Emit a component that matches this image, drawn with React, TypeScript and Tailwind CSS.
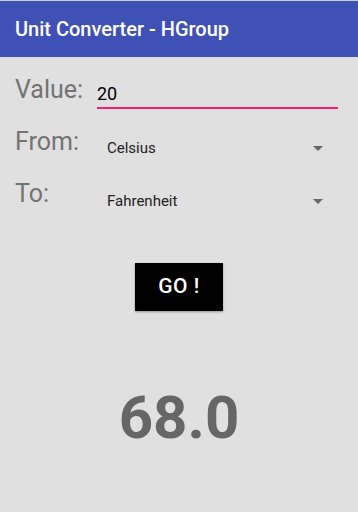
import React from "react";

function Arrow() {
  return (
    <svg width="10" height="5" viewBox="0 0 10 5" className="shrink-0">
      <path d="M0 0 L10 0 L5 5 Z" fill="#666666" />
    </svg>
  );
}

export default function App(): React.JSX.Element {
  return (
    <div
      className="w-[358px] h-[512px] bg-[#e0e0e0] overflow-hidden"
      style={{ fontFamily: "Roboto, 'Liberation Sans', sans-serif" }}
    >
      <div className="h-[1px] bg-[#c9c9c9]" />
      <div className="h-[56px] bg-[#3f51b5] flex items-center pl-[15px]">
        <span className="text-white text-[20px] font-medium leading-[24px]">
          Unit Converter - HGroup
        </span>
      </div>

      <div className="pl-[15px]">
        {/* value */}
        <div className="flex mt-[19px]">
          <div className="w-[82px] text-[25px] leading-[28px] text-[#737373]">Value:</div>
          <div className="w-[241px] pt-[6px]">
            <div className="text-[18px] leading-[24px] text-black">20</div>
            <div className="mt-[1px] h-[2px] bg-[#ff1a75]" />
          </div>
        </div>

        {/* from */}
        <div className="flex mt-[19px]">
          <div className="w-[82px] text-[25px] leading-[28px] text-[#737373]">From:</div>
          <div className="w-[241px] pt-[10px] pl-[10px] pr-[15px] flex items-center justify-between">
            <span className="text-[15px] leading-[20px] text-[#222]">Celsius</span>
            <Arrow />
          </div>
        </div>

        {/* to */}
        <div className="flex mt-[22px]">
          <div className="w-[82px] text-[25px] leading-[28px] text-[#737373]">To:</div>
          <div className="w-[241px] pt-[11px] pl-[10px] pr-[15px] flex items-center justify-between">
            <span className="text-[15px] leading-[20px] text-[#222]">Fahrenheit</span>
            <Arrow />
          </div>
        </div>
      </div>

      <div className="flex justify-center mt-[52px]">
        <button className="w-[88px] h-[48px] bg-black text-white text-[21px] font-medium tracking-[0.5px] shadow-[0_1px_2px_rgba(0,0,0,0.35)]">
          GO !
        </button>
      </div>

      <div className="mt-[72px] text-center text-[60px] leading-[70px] font-bold text-[#666666]">
        68.0
      </div>
    </div>
  );
}
